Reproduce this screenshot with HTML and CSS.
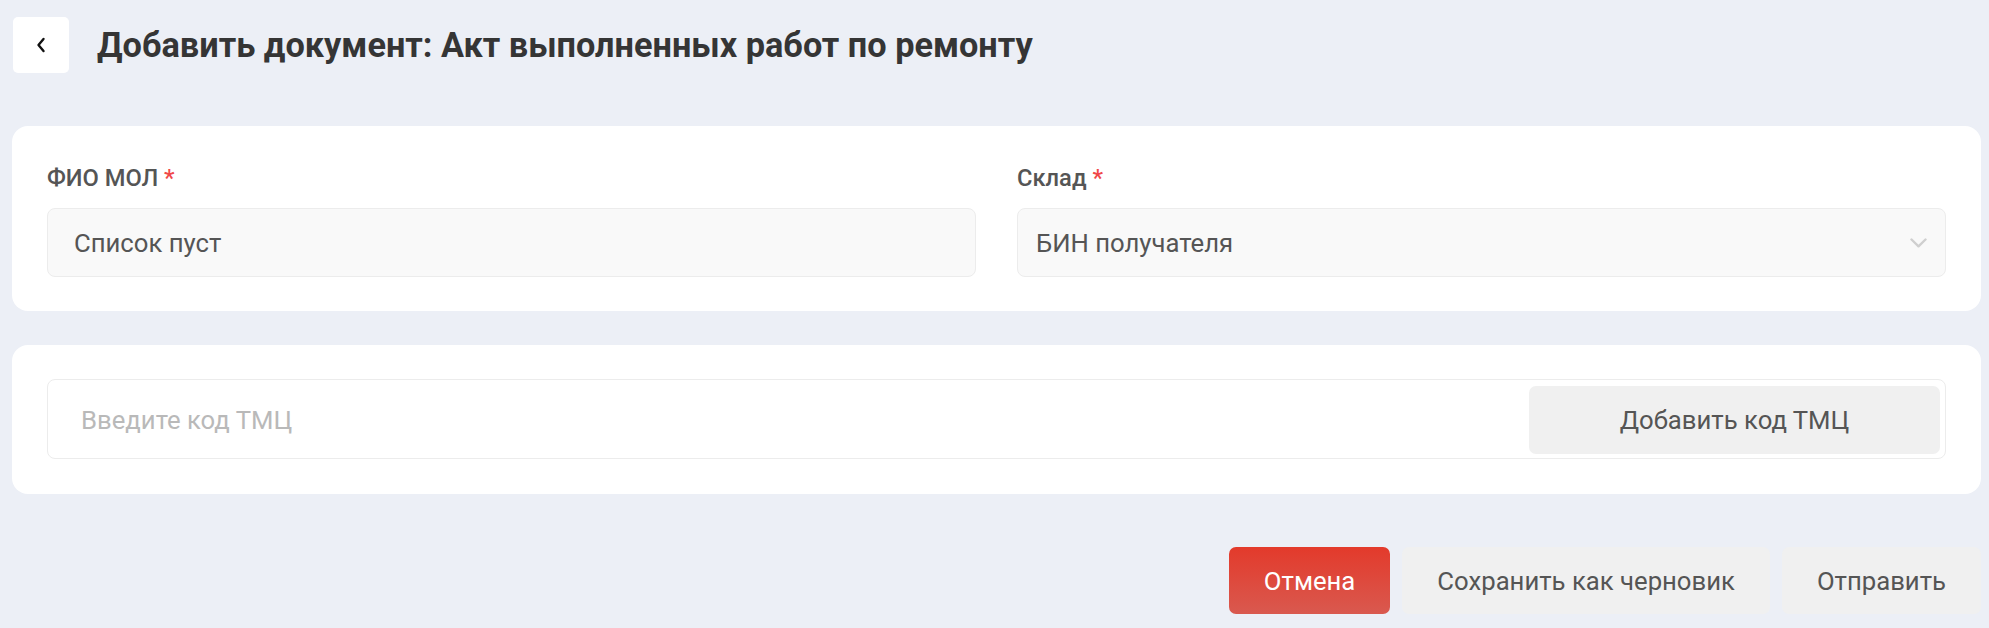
FILE: index.html
```html
<!DOCTYPE html>
<html lang="ru">
<head>
<meta charset="utf-8">
<title>Добавить документ</title>
<link rel="stylesheet" href="styles.css">
</head>
<body>
<div class="page">
  <header class="head">
    <button class="back" type="button" aria-label="Назад">
      <svg width="10" height="16" viewBox="0 0 10 16"><path d="M7.5 2 L2.5 8 L7.5 14" fill="none" stroke="#111" stroke-width="2.4" stroke-linecap="round" stroke-linejoin="round"/></svg>
    </button>
    <h1 class="title">Добавить документ: Акт выполненных работ по ремонту</h1>
  </header>

  <section class="card fields">
    <div class="field">
      <div class="label">ФИО МОЛ <span class="req">*</span></div>
      <div class="input">Список пуст</div>
    </div>
    <div class="field">
      <div class="label">Склад <span class="req">*</span></div>
      <div class="select">
        <span>БИН получателя</span>
        <svg width="17" height="10" viewBox="0 0 17 10"><path d="M1.5 1.5 L8.5 8.3 L15.5 1.5" fill="none" stroke="#cfcfcf" stroke-width="2.4" stroke-linecap="round" stroke-linejoin="round"/></svg>
      </div>
    </div>
  </section>

  <section class="card">
    <div class="codebox">
      <input class="code-input" type="text" placeholder="Введите код ТМЦ">
      <button class="btn grey add" type="button">Добавить код ТМЦ</button>
    </div>
  </section>

  <div class="actions">
    <button class="btn danger" type="button">Отмена</button>
    <button class="btn grey" type="button">Сохранить как черновик</button>
    <button class="btn grey" type="button">Отправить</button>
  </div>
</div>
</body>
</html>
```

FILE: styles.css
```css
* { box-sizing: border-box; }

html, body {
  margin: 0;
  padding: 0;
  background: #eceff6;
  font-family: Roboto, "Noto Sans", "Liberation Sans", sans-serif;
  color: #555;
}

.page {
  padding: 17px 8px 0 12px;
  display: flex;
  flex-direction: column;
}

.head {
  display: flex;
  align-items: center;
  gap: 28px;
  height: 56px;
  padding-left: 1px;
}

.back {
  width: 56px;
  height: 56px;
  border: none;
  border-radius: 5px;
  background: #fff;
  display: flex;
  align-items: center;
  justify-content: center;
  padding: 0;
  cursor: pointer;
}

.title {
  margin: 0;
  font-size: 34.3px;
  font-weight: 700;
  color: #353535;
  line-height: 1;
}

.card {
  background: #fff;
  border-radius: 16px;
  padding: 34px 35px 35px;
  margin-top: 53px;
}

.card + .card { margin-top: 34px; }

.fields {
  display: grid;
  grid-template-columns: 1fr 1fr;
  column-gap: 41px;
  padding-top: 35px;
  padding-bottom: 34px;
}

.field {
  display: flex;
  flex-direction: column;
  gap: 13px;
}

.label {
  font-size: 23.7px;
  line-height: 34px;
  font-weight: 500;
  color: #555;
}

.req { color: #f04848; }

.input, .select {
  height: 69px;
  background: #f9f9f9;
  border: 1px solid #ececec;
  border-radius: 8px;
  display: flex;
  align-items: center;
  font-size: 25.7px;
  color: #555;
}

.input { padding: 0 26px; }

.select {
  padding: 0 18px;
  justify-content: space-between;
}

.codebox {
  height: 80px;
  border: 1px solid #ececec;
  border-radius: 8px;
  display: flex;
  align-items: center;
  padding: 6px 5px 4px 33px;
  gap: 20px;
}

.code-input {
  flex: 1;
  border: none;
  outline: none;
  background: transparent;
  font-family: inherit;
  font-size: 25.7px;
  color: #555;
  padding: 0;
}

.code-input::placeholder { color: #b9b9b9; }

.btn {
  border: none;
  border-radius: 7px;
  font-family: inherit;
  font-size: 25.7px;
  color: #555;
  padding: 0 35px;
  height: 67px;
  cursor: pointer;
}

.grey { background: #f0f0f0; }

.add {
  width: 411px;
  height: 68px;
  padding: 0;
}

.danger {
  background: linear-gradient(180deg, #e33a2b 0%, #d9594f 100%);
  color: #fff;
}

.actions {
  display: flex;
  justify-content: flex-end;
  gap: 12px;
  margin-top: 53px;
}
```
